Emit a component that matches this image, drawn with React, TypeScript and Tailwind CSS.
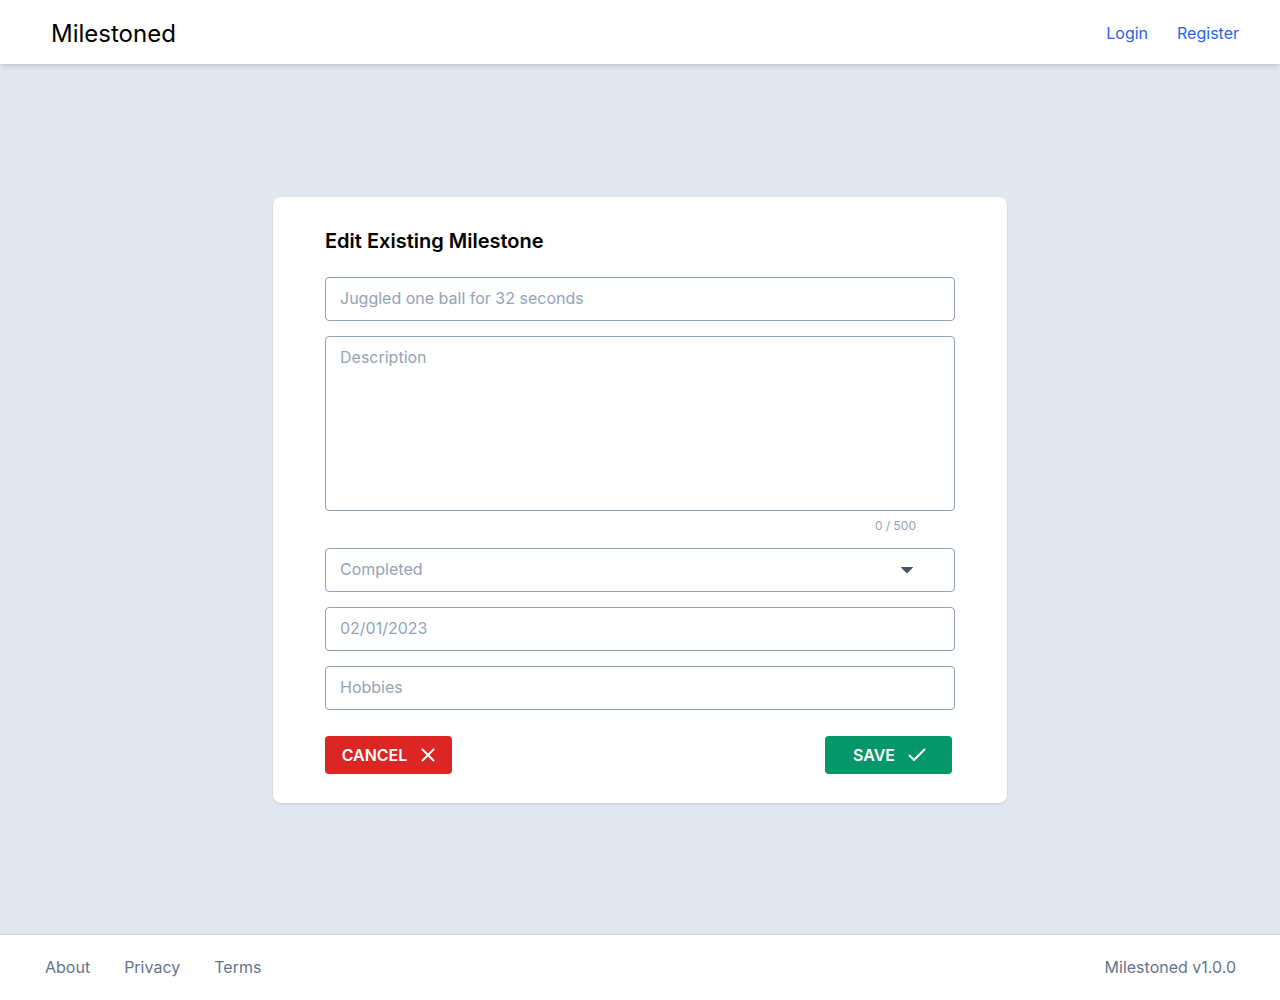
import { useState } from "react";

const inputClass =
    "w-full h-[44px] rounded border border-[#94a3b8] bg-white px-[14px] pb-[2px] text-base text-slate-700 placeholder:text-[#94a3b8] outline-none";

const App = () => {
    const [title, setTitle] = useState("");
    const [description, setDescription] = useState("");

    return (
        <div className="min-h-screen flex flex-col bg-[#e2e8f0]" style={{ fontFamily: "Inter, 'Noto Sans', sans-serif" }}>
            <header className="h-16 bg-white shadow-md flex items-center justify-between pl-[51px] pr-[41px] pt-1 z-10">
                <span className="text-2xl text-black">Milestoned</span>
                <nav className="flex items-center gap-[29px] text-base text-[#2563eb] pb-[2px]">
                    <a href="#">Login</a>
                    <a href="#">Register</a>
                </nav>
            </header>

            <main className="flex-1 flex items-center justify-center pt-[2px]">
                <div className="w-[734px] rounded-lg bg-white px-[52px] pt-[30px] pb-[29px] shadow-sm">
                    <h1 className="text-xl leading-7 font-semibold text-black">Edit Existing Milestone</h1>

                    <div className="mt-[22px] flex flex-col gap-[15px]">
                        <input
                            className={inputClass}
                            placeholder="Juggled one ball for 32 seconds"
                            value={title}
                            onChange={(e) => setTitle(e.target.value)}
                        />
                        <div>
                            <textarea
                                className="block w-full h-[175px] resize-none rounded border border-[#94a3b8] bg-white px-[14px] py-[8px] text-base text-slate-700 placeholder:text-[#94a3b8] outline-none"
                                placeholder="Description"
                                maxLength={500}
                                value={description}
                                onChange={(e) => setDescription(e.target.value)}
                            />
                            <div className="mt-[7px] pr-[39px] text-right text-xs leading-4 text-[#94a3b8]">
                                {description.length} / 500
                            </div>
                        </div>
                    </div>

                    <div className="mt-[14px] flex flex-col gap-[15px]">
                        <div className={inputClass + " flex items-center justify-between pr-[40px]"}>
                            <span className="text-[#94a3b8]">Completed</span>
                            <svg width="14" height="8" viewBox="0 0 14 8" className="text-[#475569] mt-[2px]">
                                <path d="M1.5 1 H12.5 Q13.5 1 12.8 1.8 L7.8 6.8 Q7 7.6 6.2 6.8 L1.2 1.8 Q0.5 1 1.5 1 Z" fill="currentColor" />
                            </svg>
                        </div>
                        <input className={inputClass} placeholder="02/01/2023" />
                        <input className={inputClass} placeholder="Hobbies" />
                    </div>

                    <div className="mt-[26px] flex items-center justify-between pr-[3px]">
                        <button className="h-[38px] w-[127px] rounded bg-[#dc2626] text-white font-semibold text-base uppercase flex items-center justify-center gap-[14px]">
                            Cancel
                            <svg width="14" height="14" viewBox="0 0 14 14" fill="none" stroke="currentColor" strokeWidth="2" strokeLinecap="round">
                                <path d="M1.5 1.5 L12.5 12.5 M12.5 1.5 L1.5 12.5" />
                            </svg>
                        </button>
                        <button className="h-[38px] w-[127px] rounded bg-[#059669] text-white font-semibold text-base uppercase flex items-center justify-center gap-[13px] pl-[2px]">
                            Save
                            <svg width="18" height="14" viewBox="0 0 18 14" fill="none" stroke="currentColor" strokeWidth="2" strokeLinecap="round" strokeLinejoin="round">
                                <path d="M1.5 7.5 L6 12 L16.5 1.5" />
                            </svg>
                        </button>
                    </div>
                </div>
            </main>

            <footer className="h-[66px] border-t border-[#cbd5e1] bg-white flex items-center justify-between pl-[45px] pr-[44px] pb-[2px] text-base text-[#64748b]">
                <nav className="flex items-center gap-[34px]">
                    <a href="#">About</a>
                    <a href="#">Privacy</a>
                    <a href="#">Terms</a>
                </nav>
                <span>Milestoned v1.0.0</span>
            </footer>
        </div>
    );
};

export default App;
